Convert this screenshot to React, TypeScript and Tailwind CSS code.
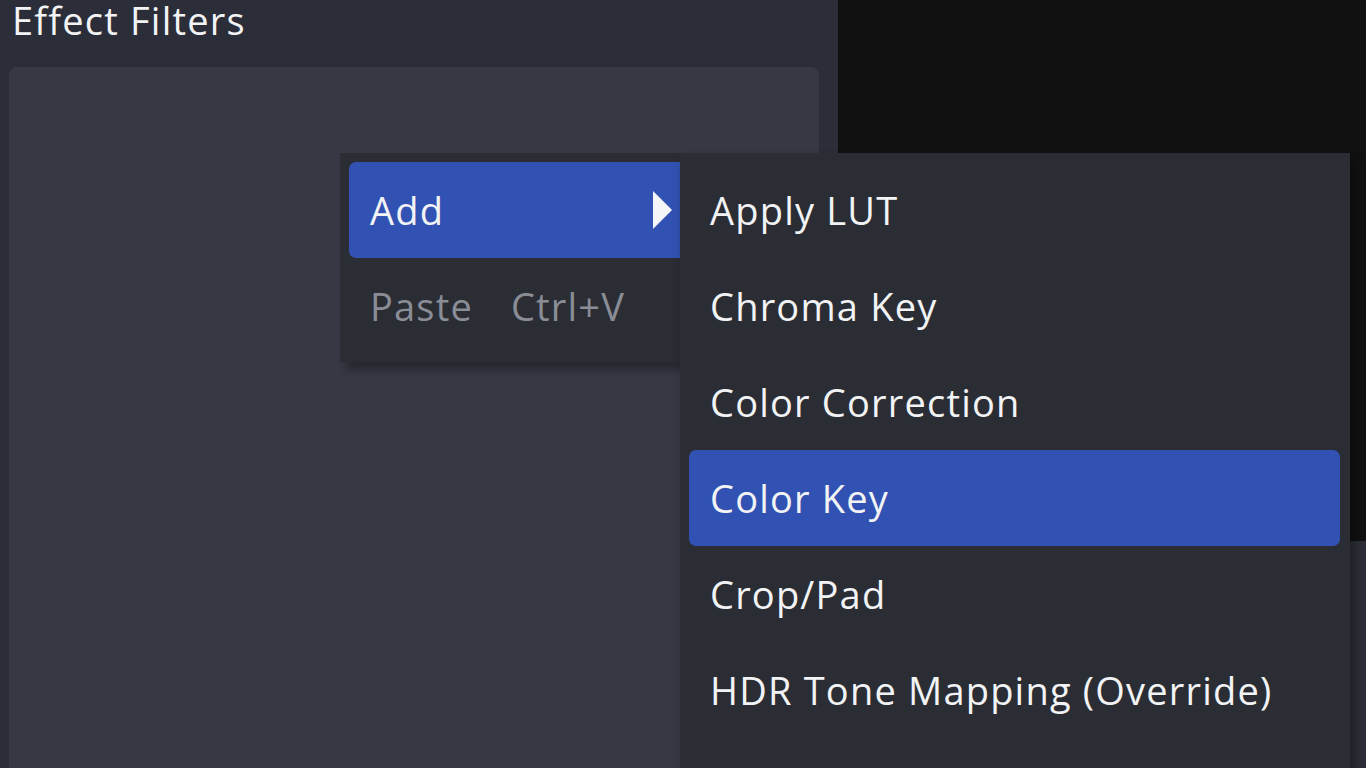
const items = [
  "Apply LUT",
  "Chroma Key",
  "Color Correction",
  "Color Key",
  "Crop/Pad",
  "HDR Tone Mapping (Override)",
];

export default function App() {
  return (
    <div
      className="relative flex h-[768px] w-[1366px] overflow-hidden bg-[#2b2e38] text-[38px] leading-none tracking-[1.2px] text-[#f2f3f5]"
      style={{ fontFamily: '"Open Sans", "Noto Sans", sans-serif' }}
    >
      {/* filters panel */}
      <div className="flex w-[838px] flex-col">
        <div className="flex h-[67px] items-start px-[12px] pt-[1px]">
          <span>Effect Filters</span>
        </div>
        <div className="ml-[9px] mr-[19px] flex-1 rounded-t-[8px] bg-[#363943]" />
      </div>

      {/* preview side */}
      <div className="flex flex-1 flex-col">
        <div className="h-[541px] bg-[#111111]" />
        <div className="flex-1 bg-[#2b2e36]" />
      </div>

      {/* context menu */}
      <div className="absolute left-[340px] top-[153px] w-[340px] bg-[#2b2d35] pb-[9px] pl-[9px] pt-[9px] shadow-[6px_8px_8px_rgba(0,0,0,0.3)]">
        <div className="flex h-[96px] items-center justify-between rounded-l-[7px] bg-[#3152b2] pl-[21px] pr-[8px]">
          <span>Add</span>
          <svg width="19" height="38" viewBox="0 0 19 38">
            <polygon points="0,0 19,19 0,38" fill="#f5f6f8" />
          </svg>
        </div>
        <div className="flex h-[95px] items-center gap-[38px] pl-[21px] text-[#8a8d95]">
          <span>Paste</span>
          <span>Ctrl+V</span>
        </div>
      </div>

      {/* submenu */}
      <div className="absolute left-[680px] top-[153px] h-[640px] w-[670px] bg-[#2b2d35] pl-[9px] pr-[10px] pt-[9px] shadow-[4px_6px_10px_rgba(0,0,0,0.35)]">
        {items.map((label) => (
          <div
            key={label}
            className={
              label === "Color Key"
                ? "flex h-[96px] items-center rounded-[7px] bg-[#3152b2] pl-[21px]"
                : "flex h-[96px] items-center pl-[21px]"
            }
          >
            {label}
          </div>
        ))}
      </div>
    </div>
  );
}
